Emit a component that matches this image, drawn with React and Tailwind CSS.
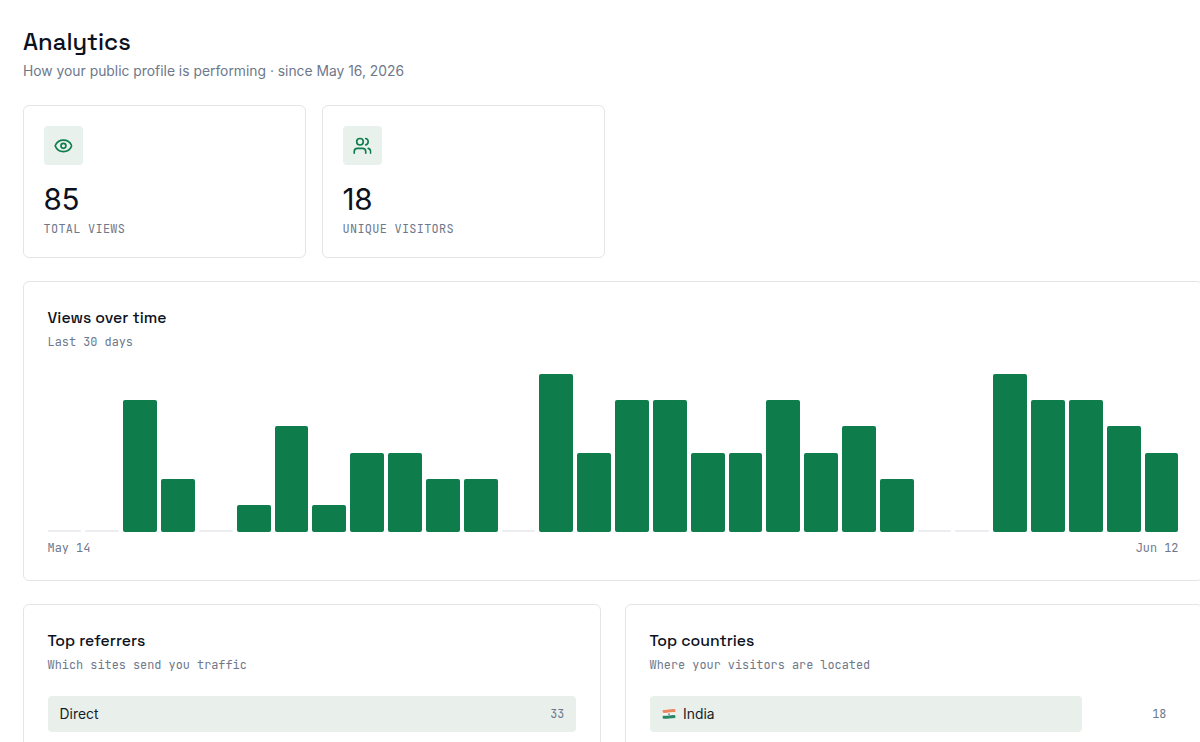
import { Eye, Users } from "lucide-react";

const views = [0, 0, 5, 2, 0, 1, 4, 1, 3, 3, 2, 2, 0, 6, 3, 5, 5, 3, 3, 5, 3, 4, 2, 0, 0, 6, 5, 5, 4, 3];
const peak = Math.max(...views);

const mono = "font-['JetBrains_Mono','DejaVu_Sans_Mono',monospace] text-[11.86px] leading-4 text-[#6e788b]";
const display = "font-['Space_Grotesk',Inter,sans-serif] font-medium text-[#0c1120]";
const card = "rounded-[6px] border border-[#e3e5e8] bg-white";

function Stat({ icon: Icon, value, label }) {
  return (
    <div className={`${card} h-[153px] px-[19.6px] pt-[19.6px]`}>
      <div className="flex size-[39.6px] items-center justify-center rounded-[4px] bg-[#e8f1ec] text-[#0f7d4b]">
        <Icon size={19.7} strokeWidth={2} className="-translate-x-[0.4px]" />
      </div>
      <div className="mt-[17.8px] text-[29.6px] leading-8 tracking-[-0.3px] text-[#0c1120]">{value}</div>
      <div className={`${mono} mt-[6px] tracking-[0.3px]`}>{label}</div>
    </div>
  );
}

function Heading({ title, note }) {
  return (
    <>
      <h2 className={`${display} w-fit text-[15.8px] leading-6`}>{title}</h2>
      <p className={`${mono} mt-[3.8px] w-fit`}>{note}</p>
    </>
  );
}

function Flag() {
  return (
    <svg width="14" height="12" viewBox="0 0 14 12" className="mr-[7.5px] shrink-0">
      <path d="M.7 1.9Q4 2.2 7 1.5T13.3 1.2V4.3Q10 4.2 7 4.8T.7 4.8Z" fill="#ed855f" />
      <path d="M.7 4.8Q4 5.2 7 4.6T13.3 4.3V7.4Q10 7.3 7 7.9T.7 7.8Z" fill="#f5f5ef" />
      <path d="M.7 7.7Q4 8.1 7 7.5T13.3 7.2V10Q10 10 7 10.5T.7 10.6Z" fill="#278767" />
      <circle cx="7" cy="6.2" r="1" fill="#7d91a4" />
    </svg>
  );
}

function RankRow({ flag, name, count, share }) {
  return (
    <div className="mt-[23.2px] grid h-[35.6px] items-center">
      <div className="col-start-1 row-start-1 h-full rounded-[4px] bg-[#e9f0eb]" style={{ width: `${share}%` }} />
      <div className="col-start-1 row-start-1 flex items-center px-3">
        {flag && <Flag />}
        <span className="text-[13.85px] leading-5 text-[#171d29]">{name}</span>
        <span className={`${mono} ml-auto`}>{count}</span>
      </div>
    </div>
  );
}

export default function App() {
  return (
    <div className="h-screen overflow-hidden bg-white font-['Inter',sans-serif]">
      <main className="ml-[23px] w-[1180px] pt-[26px]">
        <h1 className={`${display} w-fit text-[23.8px] leading-8`}>Analytics</h1>
        <p className="mt-[3px] w-fit text-[13.85px] leading-5 text-[#6e788b]">
          How your public profile is performing · since May 16, 2026
        </p>

        <section className="mt-6 grid grid-cols-4 gap-4">
          <Stat icon={Eye} value="85" label="TOTAL VIEWS" />
          <Stat icon={Users} value="18" label="UNIQUE VISITORS" />
        </section>

        <section className={`${card} mt-[23px] h-[299.5px] px-[23.6px] pt-[24px]`}>
          <Heading title="Views over time" note="Last 30 days" />
          <div className="mt-[24px] flex h-[158px] items-end gap-[4px]">
            {views.map((v, i) => (
              <div
                key={i}
                className={v ? "min-w-0 flex-1 rounded-[2px] bg-[#0f7d4b]" : "h-[1.9px] min-w-0 flex-1 rounded-[2px] bg-[#ecedf0]"}
                style={v ? { height: `${(v / peak) * 100}%` } : undefined}
              />
            ))}
          </div>
          <div className={`${mono} mt-2 flex justify-between`}>
            <span>May 14</span>
            <span>Jun 12</span>
          </div>
        </section>

        <section className="mt-[23.6px] grid grid-cols-2 gap-6">
          <div className={`${card} h-[260px] px-[23.6px] pt-[24.4px]`}>
            <Heading title="Top referrers" note="Which sites send you traffic" />
            <RankRow name="Direct" count={33} share={100} />
          </div>
          <div className={`${card} h-[260px] px-[23.6px] pt-[24.4px]`}>
            <Heading title="Top countries" note="Where your visitors are located" />
            <RankRow flag name="India" count={18} share={(18 / 22) * 100} />
          </div>
        </section>
      </main>
    </div>
  );
}
